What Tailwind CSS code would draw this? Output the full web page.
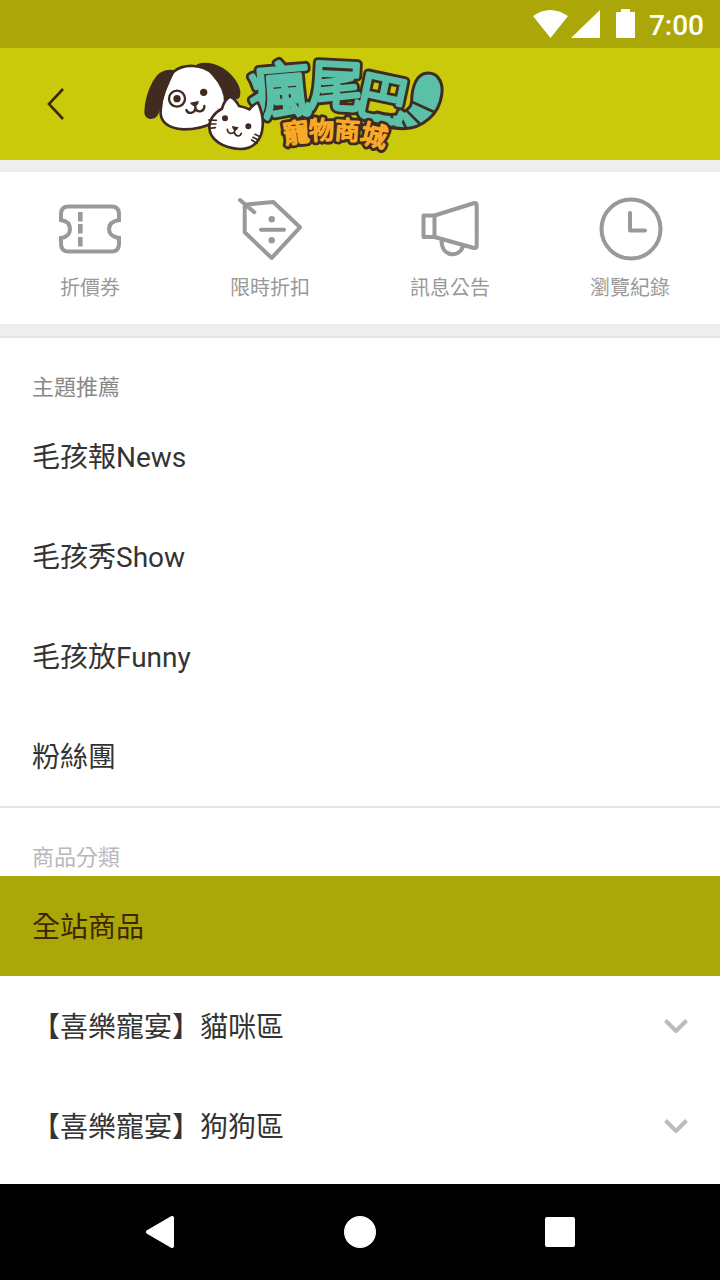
<!DOCTYPE html>
<html lang="zh-TW">
<head>
  <meta charset="UTF-8">
  <meta name="viewport" content="width=device-width, initial-scale=1.0">
  <title>瘋尾巴寵物商城</title>
  <script src="https://cdn.jsdelivr.net/npm/@tailwindcss/browser@4"></script>
</head>
<body class="flex min-h-screen flex-col bg-white font-[Roboto,'Noto_Sans_CJK_TC',sans-serif] text-[#333]">
  <!-- 狀態列 -->
  <div class="flex h-12 items-center justify-end gap-3 bg-[#aba709] px-4 text-white">
    <svg class="h-8 w-[104px]" viewBox="0 0 104 32" fill="currentColor" aria-hidden="true">
      <path d="M0 8Q17 -4 35 8L17.500 30Z"/>
      <path d="M38 30L67 2V30Z"/>
      <path d="M83 4H88V1H97V4H102V30H83Z"/>
    </svg>
    <span class="pt-1 text-[28px] leading-8 font-medium">7:00</span>
  </div>

  <!-- 頂部導覽 -->
  <header class="flex h-28 items-center bg-[#caca0a]">
    <button type="button" aria-label="返回" class="flex h-28 w-28 items-center justify-center text-[#3a2a05]">
      <svg class="h-8 w-8" viewBox="0 0 32 32" fill="none" stroke="currentColor" stroke-width="2.600">
        <path d="M23 1L9 16L23 31"/>
      </svg>
    </button>
    <a href="#" aria-label="瘋尾巴寵物商城" class="ml-7">
      <svg class="h-[108px] w-[310px] overflow-visible" viewBox="0 0 930 324" stroke-linecap="round" stroke-linejoin="round">
        <!-- 店名 -->
        <g font-family="'Noto Sans CJK TC', sans-serif" font-weight="300" text-anchor="middle" fill="#5bc0a8" stroke="#3f2b20" stroke-width="30">
          <text x="420" y="190" font-size="184" transform="rotate(-5 420 120)">瘋</text>
          <text x="588" y="168" font-size="164" transform="rotate(3 588 110)">尾</text>
          <text x="728" y="204" font-size="158" transform="rotate(12 728 145)">巴</text>
        </g>
        <!-- 尾巴 -->
        <g fill="#5bc0a8" stroke="#3f2b20" stroke-width="9">
          <path d="M815 155C815 110 830 68 866 69C900 71 910 105 905 135C898 190 850 236 790 236C750 236 705 222 680 196L712 186C770 206 812 182 815 155Z"/>
          <path d="M815 155L882 186M800 182L840 222M778 192L797 232M755 198L762 230" stroke-width="8"/>
        </g>
        <g font-family="'Noto Sans CJK TC', sans-serif" font-weight="300" text-anchor="middle" fill="#5bc0a8" stroke="#5bc0a8" stroke-width="13">
          <text x="420" y="190" font-size="184" transform="rotate(-5 420 120)">瘋</text>
          <text x="588" y="168" font-size="164" transform="rotate(3 588 110)">尾</text>
          <text x="728" y="204" font-size="158" transform="rotate(12 728 145)">巴</text>
        </g>
        <g font-family="'Noto Sans CJK TC', sans-serif" font-weight="400" text-anchor="middle" fill="#f7a928">
          <g stroke="#3f2b20" stroke-width="22">
            <text x="468" y="276" font-size="78" transform="rotate(-8 468 248)">寵</text>
            <text x="545" y="268" font-size="76" transform="rotate(-2 545 240)">物</text>
            <text x="622" y="268" font-size="76" transform="rotate(4 622 240)">商</text>
            <text x="702" y="286" font-size="80" transform="rotate(14 702 258)">城</text>
          </g>
          <g stroke="#f7a928" stroke-width="5">
            <text x="468" y="276" font-size="78" transform="rotate(-8 468 248)">寵</text>
            <text x="545" y="268" font-size="76" transform="rotate(-2 545 240)">物</text>
            <text x="622" y="268" font-size="76" transform="rotate(4 622 240)">商</text>
            <text x="702" y="286" font-size="80" transform="rotate(14 702 258)">城</text>
          </g>
        </g>
        <!-- 狗 -->
        <g stroke="#3f2b20" stroke-width="8">
          <path fill="#3f2b20" d="M174 46C200 36 240 46 270 76C292 100 302 125 294 142L250 150Z"/>
          <path fill="#fff" d="M100 66C130 40 190 42 218 72C242 98 258 125 256 160C254 210 200 238 130 238C85 236 58 215 62 180C64 145 78 95 100 66Z"/>
          <path fill="#3f2b20" d="M100 64C75 60 55 72 42 96C28 122 18 155 17 185C16 205 38 208 48 196C58 180 60 160 68 140C76 115 88 90 100 64Z"/>
          <circle cx="111" cy="146" r="24" fill="none" stroke-width="7"/>
        </g>
        <g fill="#3f2b20">
          <circle cx="111" cy="146" r="11"/>
          <circle cx="191" cy="127" r="11"/>
          <path d="M150 158L176 153Q176 165 166 168Q155 168 150 158Z"/>
        </g>
        <path d="M166 166V176C164 190 144 194 139 180M166 176C174 190 194 184 193 168" fill="none" stroke="#3f2b20" stroke-width="7"/>
        <!-- 貓 -->
        <path fill="#fff" stroke="#3f2b20" stroke-width="8" d="M271 140C282 145 292 158 297 168C308 170 320 174 328 178C336 168 346 160 354 158C364 180 370 205 368 228C366 270 340 298 300 297C250 294 208 270 208 232C207 210 224 186 246 176C250 160 260 146 271 140Z"/>
        <g fill="#3f2b20">
          <circle cx="255" cy="205" r="9"/>
          <circle cx="325" cy="229" r="9"/>
          <path d="M276 228L296 232Q290 243 285 242Q277 239 276 228Z"/>
        </g>
        <path d="M285 240L283 246C276 254 262 250 262 238M283 246C286 260 300 262 304 250M206 210L229 211M208 222L228 222M208 235L226 233M339 262L356 270M335 270L351 280M345 253L360 260" fill="none" stroke="#3f2b20" stroke-width="5"/>
      </svg>
    </a>
  </header>

  <!-- 快捷功能 -->
  <nav class="grid grid-cols-4 border-y-12 border-[#eee] bg-white text-xl leading-6 text-[#999]">
    <a href="#" class="flex h-38 flex-col items-center gap-4 pt-6">
      <svg class="h-16 w-16" viewBox="0 0 64 64" fill="none" stroke="currentColor" stroke-width="4">
        <path d="M3 24V18Q3 10.500 10.500 10.500H53.500Q61 10.500 61 18V24C55 25 51 28 51 33S55 41 61 42V48Q61 55.500 53.500 55.500H10.500Q3 55.500 3 48V42C9 41 12 38 12 33S9 25 3 24Z"/>
        <path d="M22.300 16V25.500M22.300 28V37.500M22.300 41V50.500" stroke-width="4.600"/>
      </svg>
      <span>折價券</span>
    </a>
    <a href="#" class="flex h-38 flex-col items-center gap-4 pt-6">
      <svg class="h-16 w-16" viewBox="0 0 64 64" fill="none" stroke="currentColor" stroke-width="4" stroke-linecap="round" stroke-linejoin="round">
        <path d="M6.700 8.700L35.300 6L62 31.300L33.700 62L6.700 36.300ZM2 4L16.300 16.300M23 33.700H46"/>
        <circle cx="33.700" cy="23.300" r="3.200" fill="currentColor" stroke="none"/>
        <circle cx="33.700" cy="44.300" r="3.200" fill="currentColor" stroke="none"/>
      </svg>
      <span>限時折扣</span>
    </a>
    <a href="#" class="flex h-38 flex-col items-center gap-4 pt-6">
      <svg class="h-16 w-16" viewBox="0 0 64 64" fill="none" stroke="currentColor" stroke-width="4" stroke-linejoin="round">
        <path d="M5.500 19.500H16.500V41H5.500ZM16.500 19.500L56.500 7Q58.700 7 58.700 9V50Q58.700 52.500 56 52L16.500 41M23.500 43.500C23 62 42 62 45 50"/>
      </svg>
      <span>訊息公告</span>
    </a>
    <a href="#" class="flex h-38 flex-col items-center gap-4 pt-6">
      <svg class="h-16 w-16 overflow-visible" viewBox="0 0 64 64" fill="none" stroke="currentColor" stroke-width="4" stroke-linecap="round" stroke-linejoin="round">
        <circle cx="33" cy="33" r="29.500"/>
        <path d="M32 17V34.500H47"/>
      </svg>
      <span>瀏覽紀錄</span>
    </a>
  </nav>

  <main>
    <!-- 主題推薦 -->
    <section class="border-y-2 border-[#e4e4e4]">
      <h2 class="px-8 pt-9 pb-1 text-[22px] leading-7 text-[#888]">主題推薦</h2>
      <ul class="text-[28px]">
        <li><a href="#" class="flex h-25 items-center px-8 pt-1">毛孩報News</a></li>
        <li><a href="#" class="flex h-25 items-center px-8 pt-1">毛孩秀Show</a></li>
        <li><a href="#" class="flex h-25 items-center px-8 pt-1">毛孩放Funny</a></li>
        <li><a href="#" class="flex h-25 items-center px-8 pt-1">粉絲團</a></li>
      </ul>
    </section>

    <!-- 商品分類 -->
    <section class="pb-2">
      <h2 class="px-8 pt-9 pb-1 text-[22px] leading-7 text-[#b8b8b8]">商品分類</h2>
      <ul class="text-[28px]">
        <li><a href="#" class="flex h-25 items-center bg-[#aaa708] px-8 pt-1 text-[#3f2500]">全站商品</a></li>
        <li>
          <button type="button" class="flex h-25 w-full items-center justify-between px-8 pt-1">
            【喜樂寵宴】貓咪區
            <svg class="h-6 w-6" viewBox="0 0 24 24" fill="none" stroke="#bbb" stroke-width="4" stroke-linejoin="round"><path d="M1.500 4.500L12 15L22.500 4.500"/></svg>
          </button>
        </li>
        <li>
          <button type="button" class="flex h-25 w-full items-center justify-between px-8 pt-1">
            【喜樂寵宴】狗狗區
            <svg class="h-6 w-6" viewBox="0 0 24 24" fill="none" stroke="#bbb" stroke-width="4" stroke-linejoin="round"><path d="M1.500 4.500L12 15L22.500 4.500"/></svg>
          </button>
        </li>
      </ul>
    </section>
  </main>

  <!-- 系統導覽列 -->
  <div class="mt-auto flex h-24 items-center justify-center gap-38 bg-black text-white">
    <button type="button" aria-label="返回上一頁" class="flex h-12 w-12 items-center justify-center">
      <svg class="h-8 w-8" viewBox="0 0 32 32" fill="currentColor" stroke="currentColor" stroke-width="4" stroke-linejoin="round"><path d="M4 16L28 2V30Z"/></svg>
    </button>
    <button type="button" aria-label="主畫面" class="flex h-12 w-12 items-center justify-center">
      <span class="h-8 w-8 rounded-full bg-white"></span>
    </button>
    <button type="button" aria-label="最近使用" class="flex h-12 w-12 items-center justify-center">
      <span class="h-[30px] w-[30px] rounded-xs bg-white"></span>
    </button>
  </div>
</body>
</html>
